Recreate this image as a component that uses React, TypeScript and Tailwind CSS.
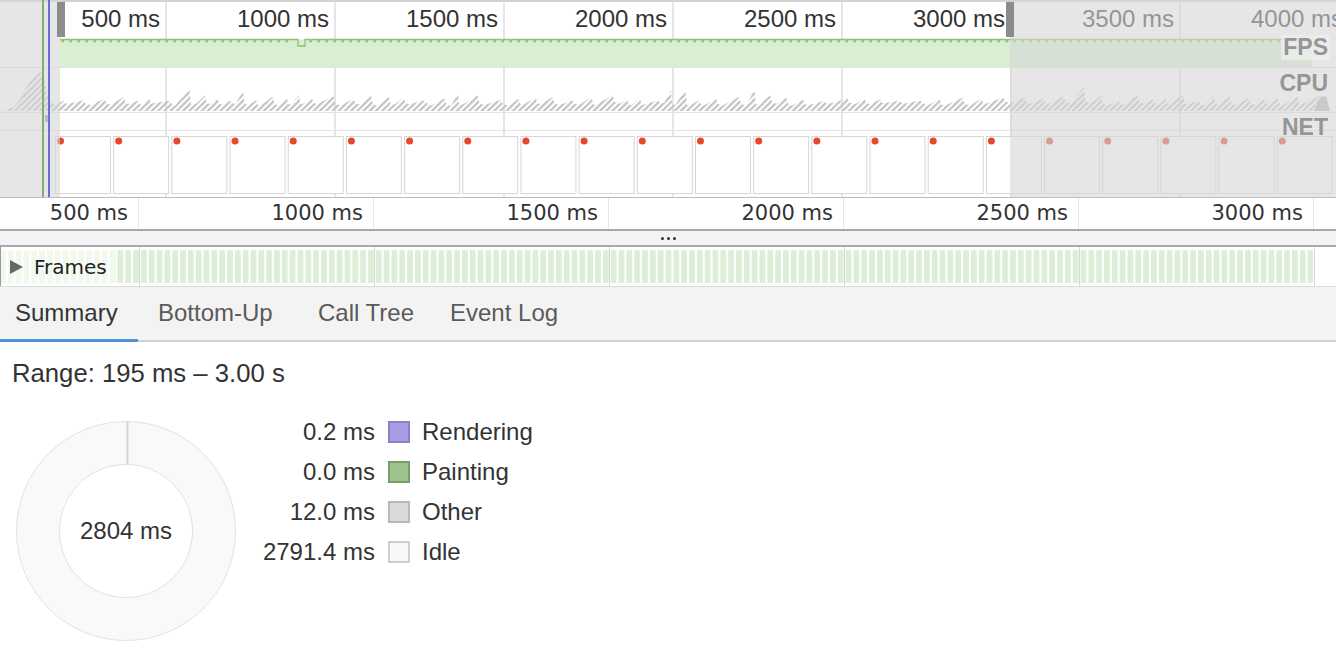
import React from 'react';

// tiny seeded generator so the CPU hatch looks the same on every render
function lcg(seed: number) {
  let s = seed >>> 0;
  return () => {
    s = (Math.imul(s, 1664525) + 1013904223) >>> 0;
    return s / 4294967296;
  };
}

const overviewGrid = [166, 335, 504, 673, 842, 1011, 1180];
const overviewLabels = ['500 ms', '1000 ms', '1500 ms', '2000 ms', '2500 ms', '3000 ms', '3500 ms', '4000 ms'];
const rulerLabels = ['500 ms', '1000 ms', '1500 ms', '2000 ms', '2500 ms', '3000 ms'];
const rulerGrid = [139, 374, 609, 844, 1079, 1314];

const fpsEdge = (() => {
  let d = 'M60 39.5';
  for (let x = 62; x < 1310; x += 8) {
    if (x >= 294 && x < 310) {
      if (x < 302) d += ' H298 V46 H305 V39.5';
      continue;
    }
    d += ` H${x} V41.5 H${x + 1.5} V39.5`;
  }
  return d + ' H1312';
})();

const cpuPoints = (() => {
  const r = lcg(11);
  const p: [number, number][] = [
    [0, 111], [6, 110], [14, 107], [20, 99], [26, 87], [33, 78], [40, 72], [44, 77], [48, 98], [54, 104],
  ];
  let x = 54;
  while (x < 1312) {
    const w = 10 + r() * 14;
    const spike = r() < 0.06 ? 8 : 0;
    const low = 5 + r() * 3;
    const peak = 10 + r() * 6 + spike;
    p.push([x + 1, 111 - low]);
    p.push([x + w * 0.72, 111 - peak]);
    p.push([x + w * 0.82, 111 - low - r() * 2]);
    x += w;
  }
  p.push([1314, 104], [1328, 111]);
  return p.map(([a, b]) => `${a.toFixed(1)},${b.toFixed(1)}`).join(' ');
})();

function OverviewChart() {
  const frames = Array.from({ length: 22 }, (_, i) => 55 + i * 58.18);
  return (
    <svg className="absolute inset-0" width="1336" height="197" viewBox="0 0 1336 197">
      <defs>
        <pattern id="hatch" width="4.4" height="4.4" patternUnits="userSpaceOnUse" patternTransform="rotate(45)">
          <rect width="2.2" height="4.4" fill="#c2c2c2" />
        </pattern>
      </defs>
      <line x1="0" y1="1" x2="1336" y2="1" stroke="#d2d2d2" strokeWidth="2" />
      {overviewGrid.map((x) => (
        <line key={x} x1={x} y1="2" x2={x} y2="197" stroke="#dedede" strokeWidth="1.5" />
      ))}
      <line x1="0" y1="67.5" x2="1336" y2="67.5" stroke="#e3e3e3" />
      <line x1="0" y1="112.5" x2="1336" y2="112.5" stroke="#e3e3e3" />
      <line x1="0" y1="130.5" x2="1336" y2="130.5" stroke="#e3e3e3" />
      <rect x="60" y="39.5" width="1252" height="28" fill="#d9efd2" />
      <path d={fpsEdge} fill="none" stroke="#8bc275" strokeWidth="1.3" />
      <polygon points={cpuPoints} fill="url(#hatch)" />
      <polygon points="1314,111 1320,97 1326,96 1330,111" fill="#b8b8b8" />
      <rect x="45" y="115" width="3" height="7" fill="#8f8fe0" />
      {frames.map((x) => (
        <g key={x}>
          <rect x={x + 0.5} y="136.5" width="55" height="57" fill="#fff" stroke="#d6d6d6" />
          <circle cx={x + 5.5} cy="141" r="3.5" fill="#e24a2e" />
        </g>
      ))}
    </svg>
  );
}

function Overview() {
  return (
    <div className="relative h-[198px] overflow-hidden border-b border-[#bdbdbd] bg-white">
      <OverviewChart />
      <div className="relative flex h-[37px] text-[24px] leading-[37px] text-[#333]">
        {overviewLabels.map((l, i) => (
          <div
            key={l}
            className={`${i === 0 ? 'w-[166px]' : 'w-[169px]'} shrink-0 pr-[6px] text-right whitespace-nowrap`}
          >
            {l}
          </div>
        ))}
      </div>
      {/* dimmed area outside the selection */}
      <div className="absolute left-0 top-0 h-full w-[60px] bg-[rgba(213,213,213,0.6)]" />
      <div className="absolute left-[1010px] right-0 top-0 h-full bg-[rgba(213,213,213,0.6)]" />
      <div className="absolute left-[42px] top-0 h-full w-[1.5px] bg-[#7fae6e]" />
      <div className="absolute left-[48px] top-0 h-full w-[1.5px] bg-[#6c6cd8]" />
      {/* selection handles */}
      <div className="absolute left-[57px] top-[2px] h-[35px] w-[8px] bg-[#8c8c8c]" />
      <div className="absolute left-[1006px] top-[2px] h-[35px] w-[8px] bg-[#8c8c8c]" />
      <div className="absolute right-[6px] top-[35px] bg-[rgba(236,236,236,0.85)] px-[2px] text-[23px] font-bold leading-[25px] text-[#969696]">
        FPS
      </div>
      <div className="absolute right-[8px] top-[70px] text-[23px] font-bold leading-[26px] text-[#969696]">
        CPU
      </div>
      <div className="absolute right-[8px] top-[114px] text-[23px] font-bold leading-[26px] text-[#969696]">
        NET
      </div>
    </div>
  );
}

function TimeRuler() {
  return (
    <div className="flex h-[33px] border-b-2 border-[#a9a9a9] bg-white font-['DejaVu_Sans',sans-serif] text-[21px] leading-[30px] text-[#333]">
      {rulerLabels.map((l, i) => (
        <div
          key={l}
          className={`${i === 0 ? 'w-[139px]' : 'w-[235px]'} shrink-0 border-r border-[#e6e6e6] pr-[10px] text-right whitespace-nowrap`}
        >
          {l}
        </div>
      ))}
    </div>
  );
}

function FramesRow() {
  return (
    <div className="relative h-[40px] border-b border-[#dcdcdc] bg-white">
      <svg className="block" width="1336" height="39" viewBox="0 0 1336 39">
        <defs>
          <pattern id="frm" width="7.83" height="39" patternUnits="userSpaceOnUse">
            <rect width="5.8" height="39" fill="#dcefd6" />
          </pattern>
        </defs>
        <rect x="1" y="3" width="1312" height="33" fill="url(#frm)" />
        {rulerGrid.map((x) => (
          <line key={x} x1={x + 0.5} y1="0" x2={x + 0.5} y2="39" stroke="#d6d6d6" />
        ))}
        <line x1="0.5" y1="0" x2="0.5" y2="39" stroke="#9a9a9a" />
      </svg>
      <div className="absolute left-[1px] top-[2px] flex h-[35px] w-[114px] items-center bg-white/60 font-['DejaVu_Sans',sans-serif] text-[20px] text-[#222]">
        <svg className="ml-[9px] mr-[11px]" width="13" height="14" viewBox="0 0 13 14">
          <polygon points="0,0 13,7 0,14" fill="#666" />
        </svg>
        Frames
      </div>
    </div>
  );
}

const tabs = [
  { label: 'Summary', cls: 'w-[138px] pl-[15px]', active: true },
  { label: 'Bottom-Up', cls: 'w-[160px] pl-[20px]', active: false },
  { label: 'Call Tree', cls: 'w-[132px] pl-[20px]', active: false },
  { label: 'Event Log', cls: 'w-[140px] pl-[20px]', active: false },
];

function Tabs() {
  return (
    <div className="flex h-[55px] border-b-2 border-[#cfcfcf] bg-[#f3f3f3] text-[24px]">
      {tabs.map((t) => (
        <div
          key={t.label}
          className={`${t.cls} -mb-[2px] flex shrink-0 items-center border-b-[3px] whitespace-nowrap ${
            t.active ? 'border-[#4b94dc] text-[#333]' : 'border-transparent text-[#5a5a5a]'
          }`}
        >
          {t.label}
        </div>
      ))}
    </div>
  );
}

const legend = [
  { value: '0.2 ms', label: 'Rendering', swatch: 'bg-[#aa9be6] border-[#8c7fc6]' },
  { value: '0.0 ms', label: 'Painting', swatch: 'bg-[#9dc48d] border-[#7b9d6d]' },
  { value: '12.0 ms', label: 'Other', swatch: 'bg-[#dadada] border-[#b9b9b9]' },
  { value: '2791.4 ms', label: 'Idle', swatch: 'bg-[#f8f8f8] border-[#cfcfcf]' },
];

function Summary() {
  return (
    <div className="bg-white text-[#333]">
      <div className="pl-[12px] pt-[17px] text-[25.7px] leading-[28px]">Range: 195 ms – 3.00 s</div>
      <div className="mt-[24px] flex">
        <div className="ml-[6px] grid h-[240px] w-[240px] place-items-center">
          <svg className="[grid-area:1/1]" width="240" height="240" viewBox="0 0 240 240">
            <circle cx="120" cy="120" r="109.5" fill="#f9f9f9" stroke="#e2e2e2" />
            <circle cx="120" cy="120" r="66.5" fill="#fff" stroke="#e2e2e2" />
            <line x1="121.5" y1="11" x2="121.5" y2="53.5" stroke="#d4d4d4" strokeWidth="2" />
          </svg>
          <div className="[grid-area:1/1] text-[24px]">2804 ms</div>
        </div>
        <div className="pt-[1px] text-[24px]">
          {legend.map((l) => (
            <div key={l.label} className="flex h-[40px] items-center">
              <div className="w-[129px] text-right">{l.value}</div>
              <div className={`ml-[13px] h-[22px] w-[22px] border-2 ${l.swatch}`} />
              <div className="ml-[12px]">{l.label}</div>
            </div>
          ))}
        </div>
      </div>
    </div>
  );
}

export default function App() {
  return (
    <div className="h-[660px] w-[1336px] overflow-hidden bg-white font-['Liberation_Sans',Arial,sans-serif]">
      <Overview />
      <TimeRuler />
      <div className="flex h-[16px] items-center justify-center gap-[3px] border-b-2 border-[#a9a9a9] bg-[#f3f3f3]">
        <div className="h-[3px] w-[3px] rounded-full bg-[#333]" />
        <div className="h-[3px] w-[3px] rounded-full bg-[#333]" />
        <div className="h-[3px] w-[3px] rounded-full bg-[#333]" />
      </div>
      <FramesRow />
      <Tabs />
      <Summary />
    </div>
  );
}
